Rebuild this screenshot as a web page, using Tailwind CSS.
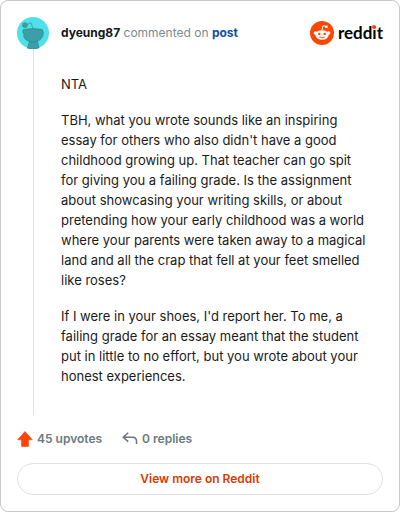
<!DOCTYPE html>
<html lang="en">
<head>
  <meta charset="UTF-8">
  <meta name="viewport" content="width=device-width, initial-scale=1">
  <title>Reddit comment embed</title>
  <script src="https://cdn.jsdelivr.net/npm/@tailwindcss/browser@4"></script>
</head>
<body class="bg-white font-['Inter','Liberation_Sans',sans-serif]">

  <article class="min-h-screen flex flex-col rounded-lg border border-[#c8c8c8] p-4">

    <!-- Header -->
    <header class="flex items-center justify-between">
      <div class="flex items-center gap-3">
        <svg class="w-8 h-8" viewBox="0 0 32 32" aria-label="dyeung87 avatar">
          <circle cx="16" cy="16" r="16" fill="#4fe0ea"/>
          <g fill="#3a9fa6" stroke="#2b848c" stroke-width=".6">
            <path d="M12.500 24h8l1.500 7q-6 1.600-11.500.2z"/>
            <path d="M6.500 12.500q9.500-1.800 19 0 1.800 3.500.2 6.800-2.400 5.400-9.700 5.700-6.800-.3-8.900-4.600-.9-1.800-.1-3.200-2.400-2.200-.5-4.700z"/>
            <circle cx="8" cy="8.200" r="2.400"/>
            <path d="M10.300 7.500l3.700-1.900 1.800 5.900" fill="none"/>
          </g>
        </svg>
        <p class="text-xs text-[#7c8a90]">
          <a href="#" class="font-bold text-[#11171a]">dyeung87</a>
          commented on
          <a href="#" class="font-bold text-[#0d4ea6]">post</a>
        </p>
      </div>
      <a href="#" class="flex items-center gap-1">
        <svg class="w-6 h-6" viewBox="0 0 24 24" aria-hidden="true">
          <circle cx="12" cy="12" r="12" fill="#ff4500"/>
          <path d="M12 9l1-4.300 3.500.8" fill="none" stroke="#fff" stroke-width="1"/>
          <circle cx="16.400" cy="5.800" r="1.400" fill="#fff"/>
          <circle cx="5.400" cy="12" r="1.800" fill="#fff"/>
          <circle cx="18.600" cy="12" r="1.800" fill="#fff"/>
          <ellipse cx="12" cy="14" rx="6.600" ry="4.800" fill="#fff"/>
          <circle cx="9.300" cy="12.900" r="1.200" fill="#ff4500"/>
          <circle cx="14.700" cy="12.900" r="1.200" fill="#ff4500"/>
          <path d="M9.200 15.900q2.800 2 5.600 0" fill="none" stroke="#ff4500" stroke-width=".9"/>
        </svg>
        <span class="font-['Lato',sans-serif] text-[17px] leading-6 font-bold text-black">redd<span class="relative">i<span class="absolute left-0 top-[3px] size-1 rounded-full bg-[#ff4500]"></span></span>t</span>
      </a>
    </header>

    <!-- Comment -->
    <div class="ml-4 grow border-l border-[#e0e3e5] pt-[25px] pb-7 pl-[27px] pr-3.5">
      <div class="space-y-4 text-[13px] leading-5 text-[#1a1a1b]">
        <p>NTA</p>
        <p>TBH, what you wrote sounds like an inspiring essay for others who also didn't have a good childhood growing up. That teacher can go spit for giving you a failing grade. Is the assignment about showcasing your writing skills, or about pretending how your early childhood was a world where your parents were taken away to a magical land and all the crap that fell at your feet smelled like roses?</p>
        <p>If I were in your shoes, I'd report her. To me, a failing grade for an essay meant that the student put in little to no effort, but you wrote about your honest experiences.</p>
      </div>
    </div>

    <!-- Votes and replies -->
    <div class="flex h-12 items-center gap-5 text-xs font-semibold text-[#6a7a80]">
      <a href="#" class="flex items-center gap-1">
        <svg class="w-4 h-4" viewBox="0 0 16 16" aria-hidden="true">
          <path d="M8 .5l7.300 8.200h-3.800v6.300q0 .5-.5.5H5q-.5 0-.5-.5V8.700H.7z" fill="#ff4500" stroke="#ff4500" stroke-width=".6" stroke-linejoin="round"/>
        </svg>
        45 upvotes
      </a>
      <a href="#" class="flex items-center gap-1">
        <svg class="w-4 h-4" viewBox="0 0 16 16" fill="none" stroke="#66767c" stroke-width="1.500" aria-hidden="true">
          <path d="M6.200 1.800L1.300 6.200l4.900 4.400M1.500 6.200h9q4 0 4 4V13"/>
        </svg>
        0 replies
      </a>
    </div>

    <button type="button" class="h-8 w-full rounded-full border border-[#dfe1e3] text-xs font-semibold text-[#d93a00]">View more on Reddit</button>
  </article>

</body>
</html>
